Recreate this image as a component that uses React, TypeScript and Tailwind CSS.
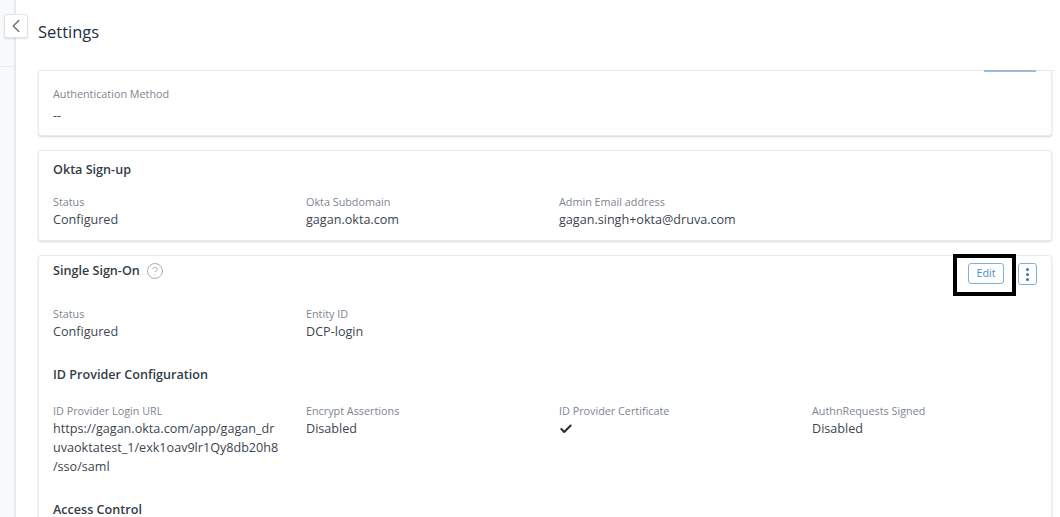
import React from 'react';
import { ChevronLeft, Check, CircleHelp } from 'lucide-react';

const Field = ({ label, value }: { label: string; value: React.ReactNode }) => (
  <div className="w-[253px] shrink-0 pr-[20px]">
    <div className="text-[10.8px] leading-[15px] text-[#7d8690]">{label}</div>
    <div className="mt-[1px] text-[12.6px] leading-[19px] text-[#3d4650]">{value}</div>
  </div>
);

const cardClass =
  'bg-white border border-[#e8ebf0] rounded-[3px] shadow-[0_1px_2px_rgba(0,0,0,0.16)] px-[14px]';

export default function App() {
  return (
    <div className="w-[1060px] h-[517px] overflow-hidden flex bg-white font-['Open_Sans',sans-serif]">
      <div className="relative w-[16px] shrink-0 bg-[#f8f9fb] border-r-2 border-[#e6e9ee]">
        <div className="h-[67px] border-b border-[#e8ebf0]" />
        <button className="absolute left-[4px] top-[14px] w-[24px] h-[24px] bg-white border border-[#e0e3e8] rounded-[3px] shadow-[0_1px_2px_rgba(0,0,0,0.12)] flex items-center justify-center">
          <ChevronLeft className="w-[22px] h-[22px] text-[#68717b]" strokeWidth={1.6} />
        </button>
      </div>

      <div className="flex-1 min-w-0 pl-[22px] pr-[8px]">
        <div className="h-[70px] pt-[21px] text-[16.5px] leading-[22px] font-medium text-[#22303e]">Settings</div>

        <div className={`${cardClass} relative w-[1014px] h-[66px] pt-[15px]`}>
          <div className="absolute right-[15px] -top-px w-[52px] h-[2px] bg-[#9dbbd9]" />
          <div className="absolute -right-[4px] -top-px w-[4px] h-px bg-[#e8ebf0]" />
          <div className="text-[10.8px] leading-[15px] text-[#7d8690]">Authentication Method</div>
          <div className="mt-[5px] text-[12.6px] leading-[19px] text-[#3d4650]">--</div>
        </div>

        <div className={`${cardClass} w-[1014px] h-[91px] mt-[14px] pt-[10px]`}>
          <div className="text-[12.6px] leading-[18px] font-semibold text-[#333d47]">Okta Sign-up</div>
          <div className="flex mt-[15px]">
            <Field label="Status" value="Configured" />
            <Field label="Okta Subdomain" value="gagan.okta.com" />
            <Field label="Admin Email address" value="gagan.singh+okta@druva.com" />
          </div>
        </div>

        <div className={`${cardClass} w-[1014px] mt-[14px] pt-[6px] h-[300px]`}>
          <div className="flex items-start justify-between h-[35px]">
            <div className="flex items-center gap-[6px]">
              <span className="text-[12.6px] leading-[18px] font-semibold text-[#333d47]">Single Sign-On</span>
              <CircleHelp className="w-[18px] h-[18px] text-[#a0a6ad]" strokeWidth={1.2} />
            </div>
            <div className="flex items-start gap-[14px] relative">
              <button className="w-[36px] h-[21px] border border-[#7fb0dc] rounded-[3px] text-[10.8px] text-[#4a8cc9] mt-[1px]">
                Edit
              </button>
              <div className="absolute left-[-15px] top-[-8px] w-[63px] h-[42px] border-[4px] border-black pointer-events-none" />
              <button className="w-[19px] h-[22px] border border-[#7fb0dc] rounded-[3px] flex flex-col items-center justify-center gap-[2px] mt-[1px]">
                <span className="w-[3px] h-[3px] rounded-full bg-[#2f78bd]" />
                <span className="w-[3px] h-[3px] rounded-full bg-[#2f78bd]" />
                <span className="w-[3px] h-[3px] rounded-full bg-[#2f78bd]" />
              </button>
            </div>
          </div>
          <div className="flex mt-[9px]">
            <Field label="Status" value="Configured" />
            <Field label="Entity ID" value="DCP-login" />
          </div>
          <div className="mt-[25px] text-[12.6px] leading-[18px] font-semibold text-[#333d47]">ID Provider Configuration</div>
          <div className="flex mt-[19px]">
            <Field
              label="ID Provider Login URL"
              value={
                <>
                  https://gagan.okta.com/app/gagan_dr
                  <br />
                  uvaoktatest_1/exk1oav9lr1Qy8db20h8
                  <br />
                  /sso/saml
                </>
              }
            />
            <Field label="Encrypt Assertions" value="Disabled" />
            <Field label="ID Provider Certificate" value={<Check className="w-[14px] h-[14px] mt-[4px] text-[#2a2f35]" strokeWidth={3.5} />} />
            <Field label="AuthnRequests Signed" value="Disabled" />
          </div>
          <div className="mt-[25px] text-[12.6px] leading-[18px] font-semibold text-[#333d47]">Access Control</div>
        </div>
      </div>
    </div>
  );
}
